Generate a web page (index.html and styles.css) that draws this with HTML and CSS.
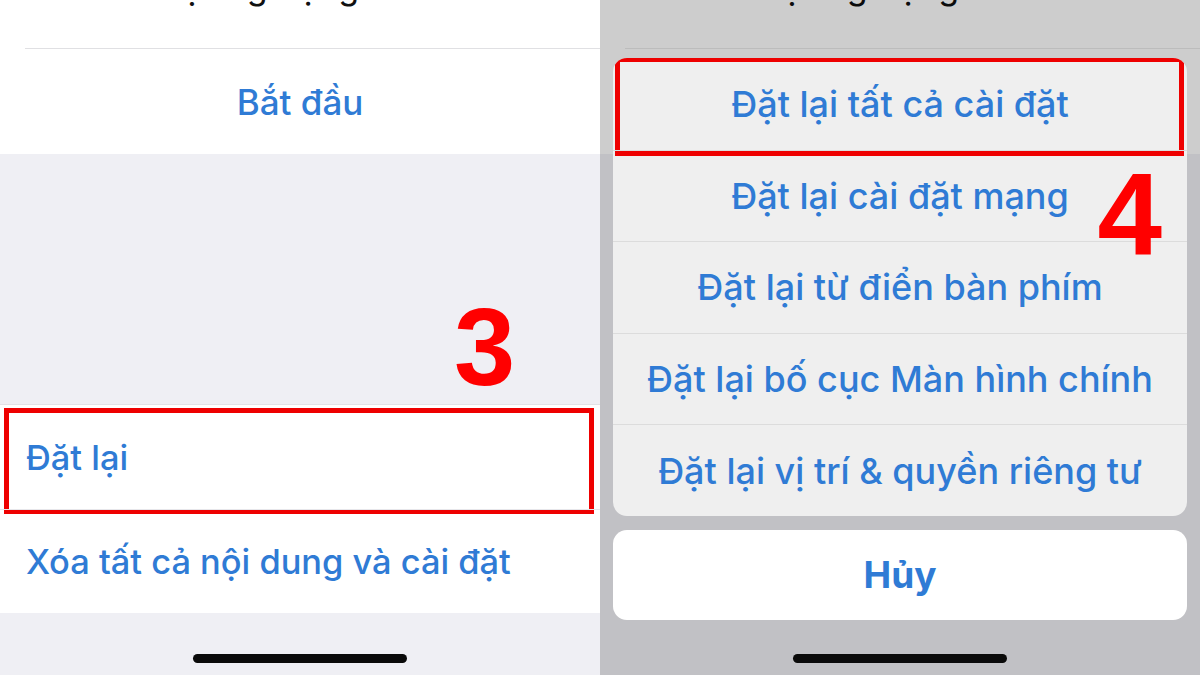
FILE: index.html
```html
<!DOCTYPE html>
<html lang="vi">
<head>
<meta charset="utf-8">
<title>Đặt lại</title>
<link rel="stylesheet" href="styles.css">
</head>
<body>
<div class="screen">
  <section class="panel left">
    <div class="top-block">
      <div class="cut-row"><span class="cut-text">Chuẩn bị ứng dụng iPhone mới</span></div>
      <div class="center-row">Bắt đầu</div>
    </div>
    <div class="gap-area">
      <span class="step step3">3</span>
    </div>
    <div class="group">
      <div class="list-row">Đặt lại<span class="mark mark-left"></span></div>
      <div class="list-row">Xóa tất cả nội dung và cài đặt</div>
    </div>
    <div class="bottom-area"><span class="home-bar"></span></div>
  </section>

  <section class="panel right">
    <div class="top-block dim">
      <div class="cut-row"><span class="cut-text">Chuẩn bị ứng dụng iPhone mới</span></div>
      <div class="center-row"></div>
    </div>
    <div class="gap-area dim"></div>
    <div class="bottom-area dim"><span class="home-bar"></span></div>

    <div class="sheet">
      <div class="sheet-group">
        <div class="sheet-row">Đặt lại tất cả cài đặt<span class="mark mark-right"></span></div>
        <div class="sheet-row">Đặt lại cài đặt mạng</div>
        <div class="sheet-row">Đặt lại từ điển bàn phím</div>
        <div class="sheet-row">Đặt lại bố cục Màn hình chính</div>
        <div class="sheet-row">Đặt lại vị trí &amp; quyền riêng tư</div>
      </div>
      <div class="sheet-cancel">Hủy</div>
      <span class="step step4">4</span>
    </div>
  </section>
</div>
</body>
</html>
```

FILE: styles.css
```css
* { box-sizing: border-box; }
html, body { margin: 0; padding: 0; }
body {
  width: 1200px;
  height: 675px;
  overflow: hidden;
  font-family: Inter, "Noto Sans", "Liberation Sans", sans-serif;
  background: #efeff4;
}
.screen {
  display: flex;
  width: 1200px;
  height: 675px;
}
.panel {
  position: relative;
  width: 600px;
  height: 675px;
  display: flex;
  flex-direction: column;
  background: #efeff4;
}
.top-block {
  height: 154px;
  background: #ffffff;
  display: flex;
  flex-direction: column;
}
.cut-row {
  height: 49px;
  margin-left: 25px;
  border-bottom: 1px solid #e0e0e3;
  overflow: hidden;
  text-align: center;
  padding-right: 25px;
}
.cut-text {
  display: block;
  margin-top: -30px;
  font-size: 34px;
  line-height: 34px;
  color: #111;
  white-space: nowrap;
}
.center-row {
  flex: 1;
  display: flex;
  align-items: center;
  justify-content: center;
  font-size: 35px;
  font-weight: 500;
  color: #2f7bd5;
}
.gap-area {
  position: relative;
  height: 250px;
  background: #efeff4;
}
.group {
  background: #ffffff;
  border-top: 1px solid #e2e2e6;
  display: flex;
  flex-direction: column;
}
.list-row {
  position: relative;
  height: 104px;
  display: flex;
  align-items: center;
  padding-left: 26px;
  font-size: 34.4px;
  font-weight: 500;
  color: #2f7bd5;
}
.list-row + .list-row { border-top: 1px solid #e6e6ea; }
.bottom-area {
  flex: 1;
  display: flex;
  align-items: flex-end;
  justify-content: center;
  padding-bottom: 12px;
  background: #efeff4;
}
.home-bar {
  width: 214px;
  height: 9px;
  border-radius: 5px;
  background: #0a0a0a;
}

/* dimmed background on the right */
.top-block.dim { background: #cdcdcd; }
.top-block.dim .cut-row { border-bottom-color: #bcbcbc; }
.top-block.dim .cut-text { color: #0c0c0c; }
.gap-area.dim, .bottom-area.dim { background: #c1c1c5; }

/* action sheet overlay */
.sheet {
  position: absolute;
  left: 13px;
  right: 13px;
  top: 58px;
  display: flex;
  flex-direction: column;
  gap: 14px;
}
.sheet-group {
  background: #efefef;
  border-radius: 14px;
  overflow: hidden;
  display: flex;
  flex-direction: column;
}
.sheet-row {
  position: relative;
  height: 91.6px;
  display: flex;
  align-items: center;
  justify-content: center;
  font-size: 36px;
  font-weight: 500;
  color: #2f7bd5;
}
.sheet-row + .sheet-row { border-top: 1px solid #dcdcdc; }
.sheet-cancel {
  height: 90px;
  background: #ffffff;
  border-radius: 14px;
  display: flex;
  align-items: center;
  justify-content: center;
  font-size: 37px;
  font-weight: 700;
  color: #2f7bd5;
}

/* annotations */
.mark {
  position: absolute;
  border: 5px solid #ee0000;
  pointer-events: none;
}
.mark-left { left: 4px; right: 6px; top: 3px; bottom: -5px; }
.mark-right { left: 2px; right: 3px; top: -1px; bottom: -6px; }
.step {
  position: absolute;
  font-family: "Liberation Sans", Arial, sans-serif;
  font-weight: 700;
  color: #ff0000;
  line-height: 1;
}
.step3 { left: 454px; top: 138px; font-size: 110px; }
.step4 { right: 25px; top: 98px; font-size: 116px; }
```
